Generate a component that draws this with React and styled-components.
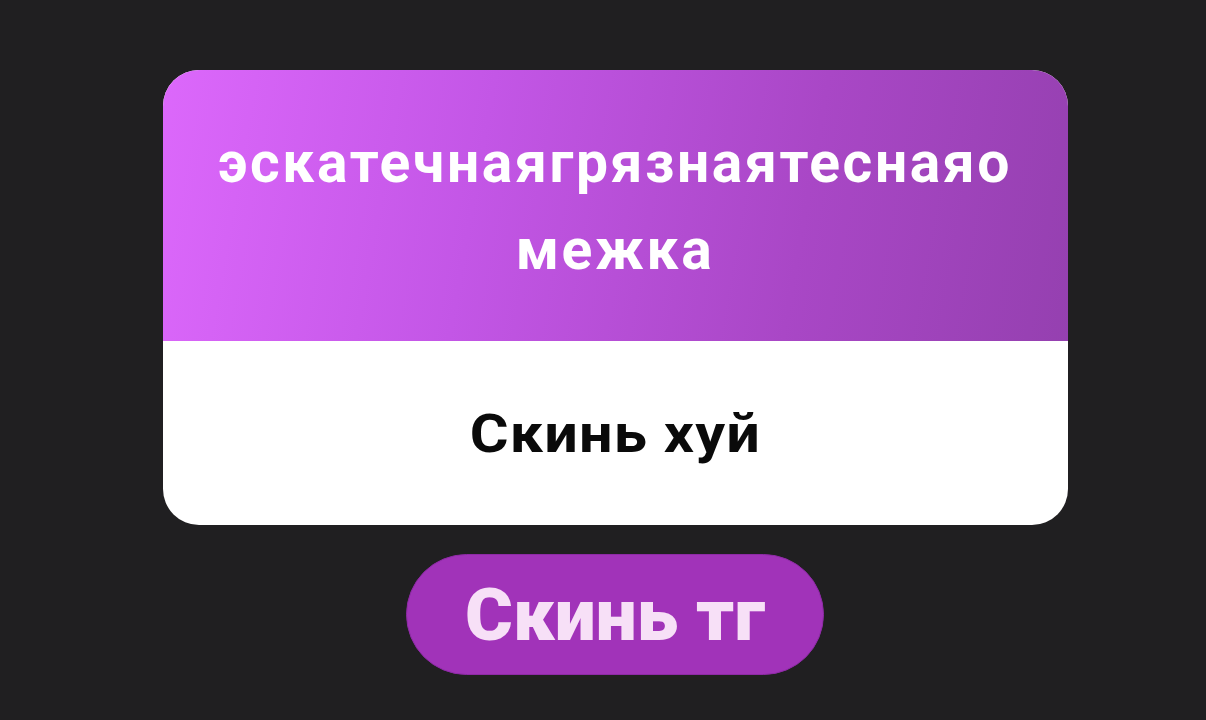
import React from "react";
import styled, { createGlobalStyle } from "styled-components";

const GlobalStyle = createGlobalStyle`
  html, body {
    margin: 0;
    padding: 0;
    background: #201f21;
  }
  body {
    font-family: Roboto, "Liberation Sans", sans-serif;
  }
`;

const App = () => {
  return (
    <>
      <GlobalStyle />
      <Page>
        <Card>
          <Header>
            <Title>эскатечнаягрязнаятеснаяо межка</Title>
          </Header>
          <Body>
            <Caption>Скинь хуй</Caption>
          </Body>
        </Card>
        <Button>Скинь тг</Button>
      </Page>
    </>
  );
};

export default App;

const Page = styled.div`
  display: flex;
  flex-direction: column;
  align-items: center;
  gap: 29px;
  min-height: 100vh;
  box-sizing: border-box;
  padding: 70px 0 0 24px;
`;

const Card = styled.div`
  width: 905px;
  border-radius: 36px;
  overflow: hidden;
  background: #ffffff;
  display: flex;
  flex-direction: column;
`;

const Header = styled.div`
  height: 271px;
  display: flex;
  align-items: center;
  justify-content: center;
  padding: 0 40px;
  box-sizing: border-box;
  background: linear-gradient(100deg, #dc68fb 0%, #c356e6 35%, #a947c6 70%, #9540b0 100%);
`;

const Title = styled.h1`
  margin: 0;
  color: #ffffff;
  font-size: 57px;
  font-weight: 700;
  line-height: 87px;
  text-align: center;
  letter-spacing: 2.6px;
  max-width: 830px;
`;

const Body = styled.div`
  height: 184px;
  display: flex;
  align-items: center;
  justify-content: center;
`;

const Caption = styled.p`
  margin: 0;
  color: #0a0a0a;
  font-size: 54px;
  font-weight: 700;
  letter-spacing: 1px;
  transform: scaleX(1.1);
`;

const Button = styled.button`
  width: 418px;
  height: 121px;
  border-radius: 61px;
  border: 1px solid #8e2aa6;
  background: #a133b9;
  color: #f7e0f7;
  font-family: Roboto, "Liberation Sans", sans-serif;
  font-size: 73px;
  font-weight: 900;
  cursor: pointer;
  display: flex;
  align-items: center;
  justify-content: center;
  padding: 0;
`;
